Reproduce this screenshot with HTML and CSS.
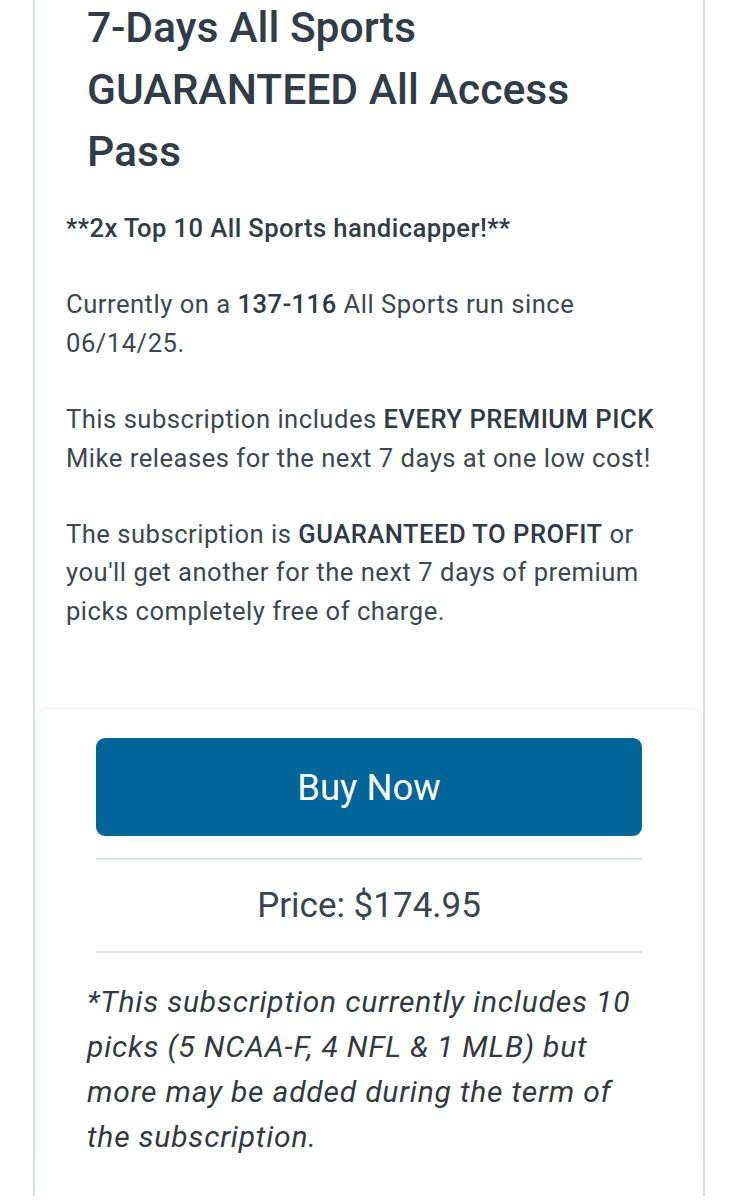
FILE: index.html
```html
<!DOCTYPE html>
<html lang="en">
<head>
<meta charset="utf-8">
<title>7-Days All Sports GUARANTEED All Access Pass</title>
<link rel="stylesheet" href="styles.css">
</head>
<body>
<div class="card">
  <div class="card-body">
    <h1 class="title">7-Days All Sports GUARANTEED All Access Pass</h1>
    <p class="lead">**2x Top 10 All Sports handicapper!**</p>
    <p>Currently on a <strong>137-116</strong> All Sports run since 06/14/25.</p>
    <p>This subscription includes <strong>EVERY PREMIUM PICK</strong> Mike releases for the next 7 days at one low cost!</p>
    <p class="last">The subscription is <strong>GUARANTEED TO PROFIT</strong> or you'll get another for the next 7 days of premium picks completely free of charge.</p>
  </div>
  <div class="purchase">
    <div class="purchase-main">
      <button class="buy" type="button">Buy Now</button>
      <div class="rule"></div>
      <div class="price">Price: $174.95</div>
      <div class="rule"></div>
    </div>
    <p class="note">*This subscription currently includes 10 picks (5 NCAA-F, 4 NFL &amp; 1 MLB) but more may be added during the term of the subscription.</p>
  </div>
</div>
</body>
</html>
```

FILE: styles.css
```css
html, body {
  margin: 0;
  padding: 0;
  background: #ffffff;
}

body {
  font-family: Roboto, "Noto Sans", "Liberation Sans", sans-serif;
  color: #3a444e;
  height: 1200px;
  overflow: hidden;
}

.card {
  margin: 0 34px 0 33px;
  border-left: 2px solid #d6dee2;
  border-right: 2px solid #d6dee2;
  min-height: 1200px;
}

.card-body {
  padding: 0 31px 78px;
}

.title {
  margin: -4px 0 27px;
  padding: 0 21px;
  font-family: "Roboto Medium", Roboto, "Noto Sans", sans-serif;
  font-size: 42.6px;
  line-height: 62px;
  font-weight: 500;
  color: #313c46;
}

.card-body p {
  margin: 0 0 38px;
  font-size: 25.6px;
  line-height: 38.4px;
  letter-spacing: 0.5px;
  color: #3d4751;
}

.card-body p.last {
  margin-bottom: 0;
}

.card-body p.lead {
  font-family: "Roboto Medium", Roboto, "Noto Sans", sans-serif;
  font-weight: 500;
  letter-spacing: 0.4px;
  color: #313c46;
}

strong {
  font-family: "Roboto Medium", Roboto, "Noto Sans", sans-serif;
  font-weight: 500;
  color: #2f3a44;
}

.purchase {
  margin: 0 1px 0 2px;
  border: 1px solid #f1f2f3;
  border-bottom: none;
  border-radius: 10px 10px 0 0;
  box-shadow: 0 -1px 4px rgba(0, 0, 0, 0.03);
  padding-top: 29px;
}

.purchase-main {
  margin: 0 59px 0 58px;
}

.buy {
  display: block;
  width: 100%;
  height: 98px;
  border: none;
  border-radius: 9px;
  background: #03669b;
  color: #ffffff;
  font-family: Roboto, "Noto Sans", "Liberation Sans", sans-serif;
  font-size: 36.5px;
  font-weight: 400;
  cursor: pointer;
}

.rule {
  height: 2px;
  background: #dfe2e4;
}

.buy + .rule {
  margin-top: 22px;
}

.price {
  text-align: center;
  font-size: 35px;
  line-height: 91px;
  color: #3a444e;
}

.note {
  margin: 27px 0 0;
  padding: 0 51px 0 49px;
  font-size: 30px;
  line-height: 44.8px;
  letter-spacing: 0.8px;
  font-style: italic;
  color: #33393f;
}
```
